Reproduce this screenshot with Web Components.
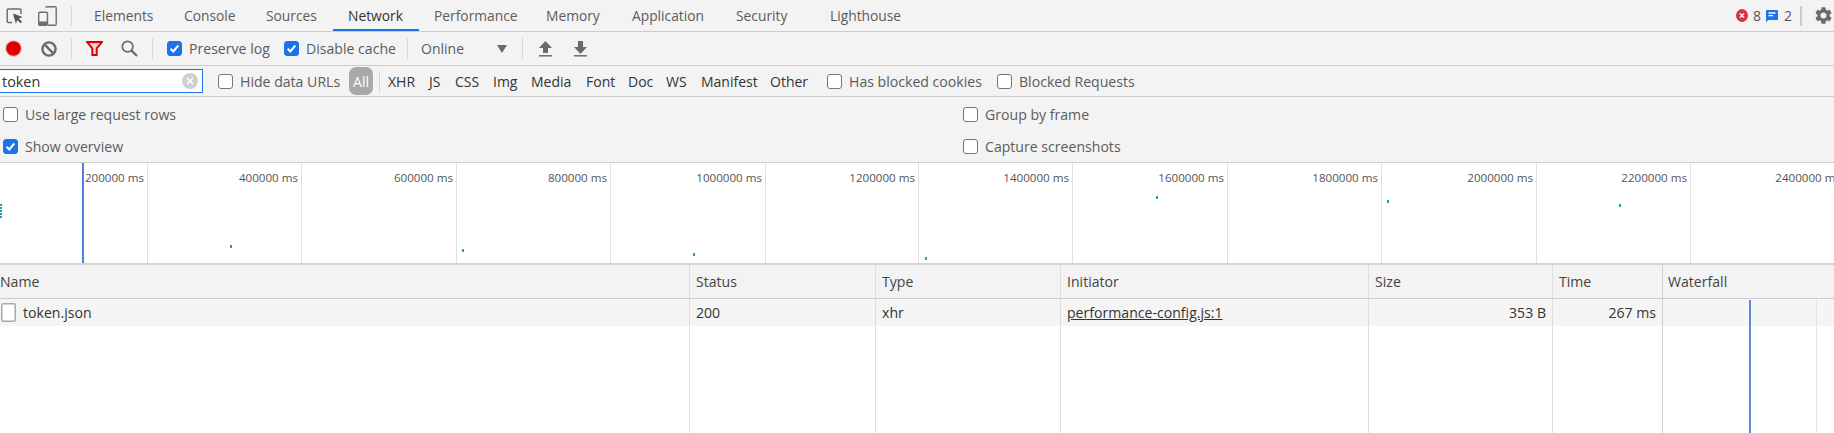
<!DOCTYPE html>
<html><head><meta charset="utf-8"><title>Network</title>
<style>
html,body{margin:0;padding:0;height:100%;overflow:hidden;background:#fff}
body{font-family:"Open Sans","Liberation Sans",sans-serif;font-size:14px;color:#555}
</style></head><body>
<dt-devtools>
  <dt-bar h="32">
    <dt-icon name="inspect" style="margin-left:6px;width:17px;height:16px"></dt-icon>
    <dt-icon name="device" style="margin-left:15px;width:19px;height:20px"></dt-icon>
    <dt-sep style="margin-left:14px;margin-right:7px;height:20px"></dt-sep>
    <dt-tab style="width:90px">Elements</dt-tab>
    <dt-tab style="width:82px">Console</dt-tab>
    <dt-tab style="width:82px">Sources</dt-tab>
    <dt-tab active style="width:86px">Network</dt-tab>
    <dt-tab style="width:112px">Performance</dt-tab>
    <dt-tab style="width:86px">Memory</dt-tab>
    <dt-tab style="width:104px">Application</dt-tab>
    <dt-tab style="width:94px">Security</dt-tab>
    <dt-tab style="width:104px">Lighthouse</dt-tab>
    <dt-icon name="error" style="margin-left:auto;width:12px;height:13px"></dt-icon>
    <dt-count style="margin-left:5px;width:7px">8</dt-count>
    <dt-icon name="message" style="margin-left:6px;width:12px;height:12px"></dt-icon>
    <dt-count style="margin-left:6px;width:7px">2</dt-count>
    <dt-sep style="margin-left:9px;width:2px;height:20px;background:#ccc"></dt-sep>
    <dt-icon name="gear" style="margin-left:13px;margin-right:2px;width:17px;height:17px"></dt-icon>
  </dt-bar>
  <dt-bar h="34">
    <dt-icon name="record" style="margin-left:6px;width:15px;height:15px"></dt-icon>
    <dt-icon name="clear" style="margin-left:20px;width:16px;height:16px"></dt-icon>
    <dt-sep style="margin-left:14px;height:21px"></dt-sep>
    <dt-icon name="filter" style="margin-left:14px;width:17px;height:15px"></dt-icon>
    <dt-icon name="search" style="margin-left:18px;width:17px;height:17px"></dt-icon>
    <dt-sep style="margin-left:14px;height:21px"></dt-sep>
    <dt-check checked style="margin-left:14px;width:117px">Preserve log</dt-check>
    <dt-check checked style="width:123px">Disable cache</dt-check>
    <dt-sep style="height:21px"></dt-sep>
    <dt-label style="margin-left:13px;width:76px">Online</dt-label>
    <dt-icon name="caret" style="width:10px;height:8px"></dt-icon>
    <dt-sep style="margin-left:15px;height:21px"></dt-sep>
    <dt-icon name="upload" style="margin-left:16px;width:13px;height:16px"></dt-icon>
    <dt-icon name="download" style="margin-left:22px;width:13px;height:16px"></dt-icon>
  </dt-bar>
  <dt-bar h="31">
    <dt-search style="width:203px">token</dt-search>
    <dt-check style="margin-left:15px;width:117px">Hide data URLs</dt-check>
    <dt-pill style="margin-left:14px">All</dt-pill>
    <dt-sep style="margin-left:6px;height:21px"></dt-sep>
    <dt-type style="margin-left:8px;width:41px">XHR</dt-type>
    <dt-type style="width:26px">JS</dt-type>
    <dt-type style="width:38px">CSS</dt-type>
    <dt-type style="width:38px">Img</dt-type>
    <dt-type style="width:55px">Media</dt-type>
    <dt-type style="width:42px">Font</dt-type>
    <dt-type style="width:38px">Doc</dt-type>
    <dt-type style="width:35px">WS</dt-type>
    <dt-type style="width:69px">Manifest</dt-type>
    <dt-type style="width:57px">Other</dt-type>
    <dt-check style="width:170px">Has blocked cookies</dt-check>
    <dt-check>Blocked Requests</dt-check>
  </dt-bar>
  <dt-settings>
    <dt-check>Use large request rows</dt-check>
    <dt-check>Group by frame</dt-check>
    <dt-check checked>Show overview</dt-check>
    <dt-check>Capture screenshots</dt-check>
  </dt-settings>
  <dt-overview></dt-overview>
  <dt-net-table></dt-net-table>
</dt-devtools>
<script>
const FONT = '"Open Sans","Liberation Sans",sans-serif';
function el(name, css, html, extra){
  class C extends HTMLElement{
    constructor(){super();const r=this.attachShadow({mode:'open'});
      r.innerHTML='<style>'+css+'</style>'+(typeof html==='function'?html(this):html);}
    connectedCallback(){ if(extra) extra(this); }
  }
  customElements.define(name,C);
}
el('dt-devtools',':host{display:flex;flex-direction:column;width:1834px;height:433px;background:#fff;overflow:hidden;font:14px '+FONT+';color:#555}','<slot></slot>');
el('dt-bar',':host{display:flex;align-items:center;flex:none;box-sizing:border-box;background:#f3f3f3;border-bottom:1px solid #cdcdcd;height:var(--h)}','<slot></slot>',e=>{e.style.setProperty('--h',e.getAttribute('h')+'px')});
el('dt-sep',':host{display:block;flex:none;width:1px;background:#d6d6d6}','');
el('dt-tab',':host{display:flex;flex:none;box-sizing:border-box;height:31px;align-items:center;padding-left:15px;color:#5c5c5c;font-size:13.8px;white-space:nowrap}:host([active]){color:#333;box-shadow:inset 0 -2px 0 #1a73e8}','<slot></slot>');
el('dt-count',':host{display:block;flex:none;font-size:14px;color:#555;line-height:18px;margin-top:1px}','<slot></slot>');
el('dt-label',':host{display:block;flex:none;color:#5c5c5c;font-size:14px;white-space:nowrap}','<slot></slot>');
el('dt-type',':host{display:block;flex:none;color:#333;font-size:14px;white-space:nowrap}','<slot></slot>');
el('dt-pill',':host{display:flex;flex:none;width:24px;height:28px;align-items:center;justify-content:center;background:#a9a9a9;color:#fff;border-radius:7px;font-size:14px}','<slot></slot>');
el('dt-check',`:host{display:inline-flex;flex:none;align-items:center;gap:7px;color:#5c5c5c;font-size:14.1px;white-space:nowrap}
  .b{flex:none;box-sizing:border-box;width:15px;height:15px;border:1px solid #767676;border-radius:3px;background:#fff;display:flex}
  :host([checked]) .b{background:#1a73e8;border-color:#1a73e8}
  svg{display:none;width:13px;height:13px}:host([checked]) svg{display:block}`,
  `<span class="b"><svg viewBox="0 0 13 13"><path d="M2.6 6.8l2.7 2.7 5-6" fill="none" stroke="#fff" stroke-width="2"/></svg></span><span><slot></slot></span>`);
el('dt-search',`:host{display:flex;flex:none;box-sizing:border-box;height:24px;align-items:center;background:#fff;border:1px solid #1a73e8;border-left:0;padding-left:2px;color:#333;font-size:14.4px;justify-content:space-between;padding-right:4px}
  svg{width:16px;height:16px;display:block}`,
  `<span><slot></slot></span><svg viewBox="0 0 16 16"><circle cx="8" cy="8" r="8" fill="#cfcfcf"/><path d="M5 5l6 6M11 5l-6 6" stroke="#fff" stroke-width="1.6"/></svg>`);
el('dt-settings',':host{display:grid;flex:none;box-sizing:border-box;height:66px;grid-template-columns:963px 1fr;grid-auto-rows:32px;align-items:center;padding:1px 0 1px 3px;background:#f3f3f3;border-bottom:1px solid #cdcdcd;margin-left:0}::slotted(:nth-child(even)){margin-left:-3px}','<slot></slot>');

const ICONS={
 inspect:`<svg viewBox="0 0 17 16"><path d="M6 14.5H2.2a1 1 0 0 1-1-1V2a1 1 0 0 1 1-1H14a1 1 0 0 1 1 1v4" fill="none" stroke="#6e6e6e" stroke-width="1.5"/><path d="M7 5.5l9.6 3.6-3.7 1.4 3.1 3.2-1.6 1.6-3.1-3.2-1.4 3.7z" fill="#555"/></svg>`,
 device:`<svg viewBox="0 0 19 20"><path d="M8 1.7a1 1 0 0 1 1-1h8.2a1 1 0 0 1 1 1v16.6a1 1 0 0 1-1 1H10" fill="none" stroke="#6e6e6e" stroke-width="1.4"/><rect x=".7" y="6.2" width="8.8" height="13.1" rx="1.2" fill="#f3f3f3" stroke="#6e6e6e" stroke-width="1.4"/><rect x="1" y="15.5" width="8" height="3.6" fill="#6e6e6e"/></svg>`,
 error:`<svg viewBox="0 0 12 13"><ellipse cx="6" cy="6.5" rx="6" ry="6.5" fill="#e0323c"/><path d="M4 4.5l4 4M8 4.5l-4 4" stroke="#fff" stroke-width="1.5"/></svg>`,
 message:`<svg viewBox="0 0 12 12"><path d="M1 0h10a1 1 0 0 1 1 1v8a1 1 0 0 1-1 1H2.5L0 12V1a1 1 0 0 1 1-1z" fill="#1a73e8"/><path d="M2.5 3h7M2.5 5.6h4.5" stroke="#fff" stroke-width="1.3"/></svg>`,
 gear:`<svg viewBox="2.4 2 19.2 20"><path fill="#6a6a6a" d="M19.14 12.94c.04-.3.06-.61.06-.94 0-.32-.02-.64-.07-.94l2.03-1.58a.49.49 0 0 0 .12-.61l-1.92-3.32a.488.488 0 0 0-.59-.22l-2.39.96c-.5-.38-1.03-.7-1.62-.94l-.36-2.54a.484.484 0 0 0-.48-.41h-3.84c-.24 0-.43.17-.47.41l-.36 2.54c-.59.24-1.13.57-1.62.94l-2.39-.96c-.22-.08-.47 0-.59.22L2.74 8.87c-.12.21-.08.47.12.61l2.03 1.58c-.05.3-.09.63-.09.94s.02.64.07.94l-2.03 1.58a.49.49 0 0 0-.12.61l1.92 3.32c.12.22.37.29.59.22l2.39-.96c.5.38 1.03.7 1.62.94l.36 2.54c.05.24.24.41.48.41h3.84c.24 0 .44-.17.47-.41l.36-2.54c.59-.24 1.13-.56 1.62-.94l2.39.96c.22.08.47 0 .59-.22l1.92-3.32c.12-.22.07-.47-.12-.61l-2.01-1.58zM12 15.6c-1.98 0-3.6-1.62-3.6-3.6s1.62-3.6 3.6-3.6 3.6 1.62 3.6 3.6-1.62 3.6-3.6 3.6z"/></svg>`,
 record:`<svg viewBox="0 0 15 15" style="overflow:visible"><circle cx="7.5" cy="7.5" r="8.6" fill="#f4c4c4"/><circle cx="7.5" cy="7.5" r="7.3" fill="#e00000"/></svg>`,
 clear:`<svg viewBox="0 0 16 16"><circle cx="8" cy="8" r="6.6" fill="none" stroke="#6a6a6a" stroke-width="2.4"/><path d="M3.4 3.4l9.2 9.2" stroke="#6a6a6a" stroke-width="2.4"/></svg>`,
 filter:`<svg viewBox="0 0 17 15"><path d="M1 1h15l-5.3 6.4V14H6.3V7.4z" fill="#f5cfcf" stroke="#d90000" stroke-width="1.9"/><path d="M1 1h15" stroke="#d90000" stroke-width="2.2"/></svg>`,
 search:`<svg viewBox="0 0 17 17"><circle cx="6.6" cy="6.6" r="5.3" fill="none" stroke="#6a6a6a" stroke-width="1.7"/><path d="M10.6 10.6l5.4 5.4" stroke="#6a6a6a" stroke-width="2.2"/></svg>`,
 caret:`<svg viewBox="0 0 10 8"><path d="M0 0h10L5 8z" fill="#6a6a6a"/></svg>`,
 upload:`<svg viewBox="0 0 13 16"><path d="M6.5 0L13 7H9v5H4V7H0z" fill="#6a6a6a"/><path d="M0 14.8h13" stroke="#6a6a6a" stroke-width="1.5"/></svg>`,
 download:`<svg viewBox="0 0 13 16"><path d="M4 0h5v6h4l-6.5 7L0 6h4z" fill="#6a6a6a"/><path d="M0 14.8h13" stroke="#6a6a6a" stroke-width="1.5"/></svg>`,
 file:`<svg viewBox="0 0 15 19"><rect x=".75" y=".75" width="13.5" height="17.5" rx="1.5" fill="#fff" stroke="#a8a8a8" stroke-width="1.5"/></svg>`
};
el('dt-icon',':host{display:block;flex:none}svg{display:block;width:100%;height:100%}',e=>ICONS[e.getAttribute('name')]||'');

// Overview: ruler cells by flow; request ticks sit on the free time axis.
const cells=[[148,'200000 ms'],[154,'400000 ms'],[155,'600000 ms'],[154,'800000 ms'],[155,'1000000 ms'],[153,'1200000 ms'],[154,'1400000 ms'],[155,'1600000 ms'],[154,'1800000 ms'],[155,'2000000 ms'],[154,'2200000 ms'],[154,'2400000 ms']];
const ticks=[[230,82],[461.5,86],[693,90],[924.5,94],[1156,33],[1387,37],[1618.5,41]];
el('dt-overview',`:host{display:flex;flex:none;position:relative;box-sizing:border-box;height:102px;background:#fff;border-bottom:2px solid #d4d4d4;overflow:hidden}
  .c{flex:none;box-sizing:border-box;border-right:1px solid #e0e0e0;text-align:right;padding:6px 3px 0 0;font-size:11.6px;line-height:17px;color:#555;white-space:nowrap}
  .t{position:absolute;width:2px;height:3px;background:#22a2a8}
  .now{position:absolute;left:82px;top:0;bottom:0;width:2px;background:#4f7fdc}
  .d{position:absolute;left:0;top:41px;width:2px;height:14px;background:repeating-linear-gradient(#22a2a8 0 2px,transparent 2px 3px)}`,
  cells.map(c=>`<div class="c" style="width:${c[0]}px">${c[1]}</div>`).join('')+
  ticks.map(t=>`<i class="t" style="left:${t[0]}px;top:${t[1]}px"></i>`).join('')+'<i class="now"></i><i class="d"></i>');

const cols=[['Name','<svg viewBox="0 0 15 19" width="15" height="19">'+ICONS.file.replace(/<\/?svg[^>]*>/g,'')+'</svg><span>token.json</span>','n'],
 ['Status','200'],['Type','xhr'],['Initiator','<u>performance-config.js:1</u>'],['Size','353 B','r'],['Time','267 ms','r'],['Waterfall','','w']];
el('dt-net-table',`:host{display:grid;flex:1;min-height:0;grid-template-columns:690px 186px 185px 308px 184px 110px 1fr;grid-template-rows:34px 27px 1fr;background:#fff;font-size:14.1px;color:#333}
  div{box-sizing:border-box;border-right:1px solid #dedede;padding:0 6px;display:flex;align-items:center;white-space:nowrap;min-width:0}
  .h{background:#f3f3f3;border-bottom:1px solid #cdcdcd;color:#444}
  .b{background:#f5f5f5}
  .n{padding:0 0 0 1px;gap:7px}.hn{padding-left:0}
  .r{justify-content:flex-end}
  .last{border-right:0;position:relative;padding-left:5px}
  .cl{border-right-color:#d0d0d0}
  svg{flex:none}
  .line{position:absolute;top:1px;bottom:0;left:86px;width:2px;background:#5a8fd0}
  .grey{position:absolute;top:0;bottom:0;left:153px;width:1px;background:#e6e6e6}`,
  cols.map((c,i)=>`<div class="h ${i==6?'last':''} ${i==0?'hn':''} ${i==5?'cl':''}">${c[0]}</div>`).join('')+
  cols.map((c,i)=>`<div class="b ${c[2]||''} ${i==6?'last':''} ${i==5?'cl':''}">${c[1]}${i==6?'<i class="grey"></i><i class="line" style="top:1px"></i>':''}</div>`).join('')+
  cols.map((c,i)=>`<div class="${i==6?'last':''} ${i==5?'cl':''}">${i==6?'<i class="grey"></i><i class="line" style="top:0"></i>':''}</div>`).join(''));
</script>
</body></html>
